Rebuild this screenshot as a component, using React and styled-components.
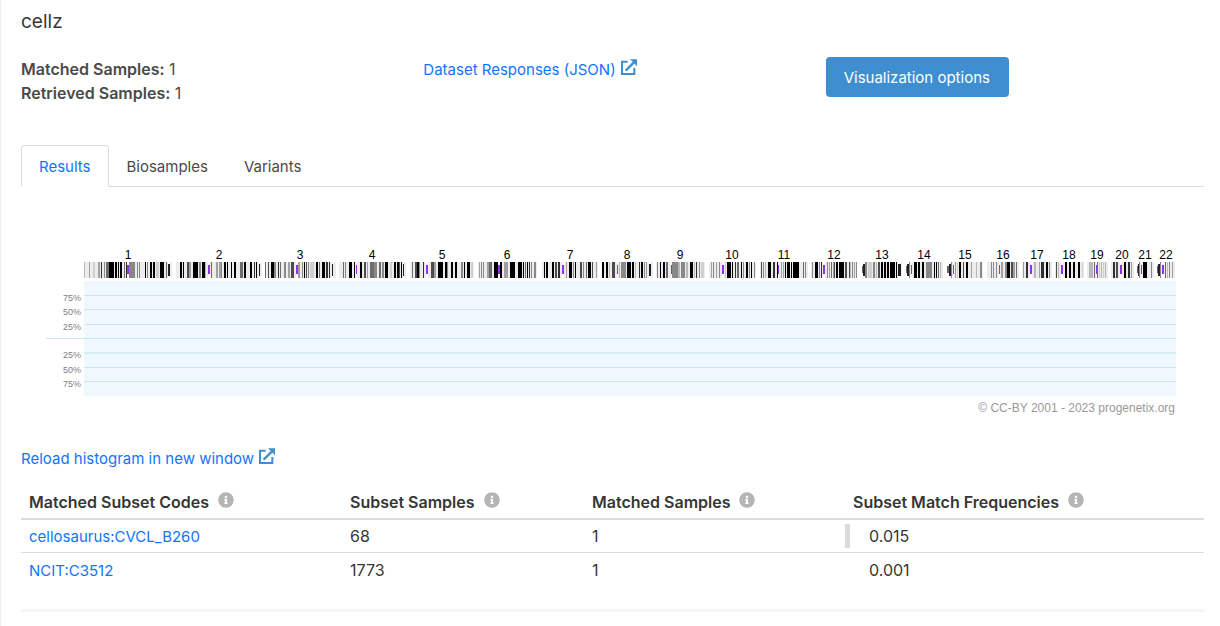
import React from "react";
import styled, { createGlobalStyle, css } from "styled-components";
import { FaInfoCircle } from "react-icons/fa";

const GlobalStyle = createGlobalStyle`
  *, *::before, *::after { box-sizing: border-box; }
  body {
    margin: 0;
    background: #fff;
    color: #4a4a4a;
    font-family: Inter, "Liberation Sans", sans-serif;
    font-size: 15px;
    line-height: 24px;
  }
`;

const Page = styled.main`
  min-height: 100vh;
  padding: 10px 16px 0 20px;
  border-left: 1px solid #ededed;
`;

const Title = styled.h1`
  margin: 0 0 23px;
  font-size: 19px;
  font-weight: 400;
  line-height: 24px;
  color: #363636;
`;

const Summary = styled.section`
  display: grid;
  grid-template-columns: repeat(3, 1fr);
  gap: 24px;
  align-items: start;
`;

const Counts = styled.div`
  font-size: 16px;
  strong { font-weight: 600; }
`;

const LinkLine = styled.div`
  padding-top: 1px;
`;

const Link = styled.a`
  color: #1473ff;
  font-size: 15px;
  line-height: 1;
  text-decoration: none;
`;

const LinkIcon = styled.svg`
  width: 16px;
  height: 16px;
  margin-left: 5px;
  color: #3e8ed0;
`;

const OptionsButton = styled.button`
  height: 40px;
  padding: 2px 19px 0 18px;
  border: 0;
  border-radius: 4px;
  background: #3e8ed0;
  color: #fff;
  font: inherit;
`;

const Tabs = styled.nav`
  display: flex;
  margin-top: 40px;
  border-bottom: 1px solid #dbdbdb;
`;

const Tab = styled.button`
  height: 42px;
  margin-bottom: -1px;
  padding: 2px 17px 0;
  border: 1px solid transparent;
  border-radius: 4px 4px 0 0;
  background: transparent;
  color: #4a4a4a;
  font: inherit;
  ${({ $active }) => $active && css`
    border-color: #dbdbdb;
    border-bottom-color: #fff;
    background: #fff;
    color: #1473ff;
  `}
`;

const Chart = styled.svg`
  display: block;
  width: 100%;
  height: auto;
  margin: 48px 0 26px;
  font-family: "Liberation Sans", Arial, sans-serif;
`;

const ChromosomeLabel = styled.text`
  font-size: 12px;
  text-anchor: middle;
  fill: #000;
`;

const AxisLabel = styled.text`
  font-size: 9px;
  text-anchor: end;
  fill: #808080;
`;

const Credit = styled.text`
  font-size: 12px;
  text-anchor: end;
  fill: #999;
`;

const Table = styled.table`
  width: 100%;
  margin-top: 15px;
  border-collapse: separate;
  border-spacing: 0;
  table-layout: fixed;
  color: #363636;
  font-size: 16px;
`;

const HeadCell = styled.th`
  width: ${({ $width }) => $width || "auto"};
  height: 34px;
  padding: 0 8px;
  border-bottom: 2px solid #dbdbdb;
  text-align: left;
  font-weight: 600;
`;

const InfoIcon = styled(FaInfoCircle)`
  width: 16px;
  height: 16px;
  margin-left: 9px;
  color: #b5b5b5;
`;

const Row = styled.tr`
  &:not(:last-child) td { border-bottom: 1px solid #dbdbdb; }
`;

const Cell = styled.td`
  height: 33px;
  padding: 4px 8px;
`;

const FrequencyCell = styled(Cell)`
  padding: 4px 0;
`;

const Frequency = styled.div`
  position: relative;
  padding-left: 24px;
`;

const FrequencyBar = styled.span`
  position: absolute;
  inset: 0 auto 0 0;
  background: #dbdbdb;
`;

const Divider = styled.hr`
  height: 3px;
  margin: 23px 0;
  border: 0;
  background: #f5f5f5;
`;

/* Each chromosome: name, start, length, bands as "offset.width.stain".
   Stain 1-9 runs light to black, c is the centromere, p a narrow satellite,
   s the shorter stalk beside it. */
const chromosomes = [
  ["1", 0, 88, "0.1.3 5.1.4 9.2.2 14.2.4 17.1.8 20.1.5 22.3.6 25.5.9 31.2.9 34.1.9 36.2.9 40.1.6 42.1.8 43.2.c 45.6.5 53.1.5 55.1.5 61.1.9 63.1.5 66.2.9 69.2.9 72.3.2 76.4.9 82.1.6 84.2.p"],
  ["2", 92, 86, "4.2.9 7.1.9 11.2.7 13.2.4 17.5.9 23.2.5 26.3.9 29.1.3 32.2.c 35.1.6 40.2.4 43.2.4 45.1.5 48.2.9 51.1.9 55.1.9 58.2.9 64.3.6 68.2.9 74.2.9 78.1.8 80.1.9 83.1.p"],
  ["3", 181, 71, "0.1.6 3.1.7 6.3.9 9.2.5 13.1.8 15.1.6 19.2.5 23.2.4 26.3.7 31.2.c 33.2.4 37.1.5 39.1.9 41.1.7 43.1.5 45.4.2 51.2.9 54.1.6 57.3.9 61.2.8 64.1.8 67.1.p"],
  ["4", 255, 67, "4.1.6 6.1.5 10.3.9 15.1.9 17.1.c 21.2.9 25.2.7 28.1.4 31.4.6 35.3.5 40.2.6 43.2.5 46.3.9 51.2.2 55.2.9 58.2.9 60.1.7 62.1.9 64.1.p"],
  ["5", 326, 64, "2.1.6 5.2.7 7.2.9 9.1.5 13.1.8 16.2.c 21.3.7 24.2.4 28.5.9 35.2.9 37.1.5 41.2.9 45.2.9 51.2.5 54.1.9 57.3.9 61.2.2"],
  ["6", 394, 59, "1.1.4 3.1.5 5.1.5 9.2.4 11.3.6 16.4.9 20.2.c 22.2.9 26.4.4 32.5.9 40.4.9 45.1.9 47.1.6 49.1.9 51.1.8 53.1.5 56.2.5"],
  ["7", 458, 56, "2.1.9 4.2.9 10.2.9 13.2.7 16.2.8 20.2.c 24.1.4 27.3.9 31.1.5 33.1.9 38.2.7 41.1.5 44.1.6 46.3.9 50.1.7 54.1.4"],
  ["8", 518, 51, "0.2.9 4.2.9 7.1.3 10.3.7 15.1.c 17.1.3 19.5.5 25.4.9 30.2.9 33.1.3 37.1.8 39.2.9 42.1.5 44.1.4 47.2.p"],
  ["9", 572, 49, "1.1.5 4.1.9 7.2.9 10.2.6 15.1.c 16.6.5 22.2.3 25.4.5 30.2.3 34.3.9 38.1.3 40.1.8 43.1.5 45.3.2"],
  ["10", 625, 47, "2.1.4 4.1.5 7.1.4 10.1.5 13.2.c 16.1.2 18.4.9 23.1.9 26.1.8 28.2.6 32.1.9 34.1.5 37.2.9 40.1.5 42.1.9 45.1.5"],
  ["11", 676, 48, "1.1.7 3.1.5 5.1.3 8.3.9 13.2.8 17.1.9 18.1.c 21.1.4 23.1.4 25.1.9 27.3.9 31.1.9 33.6.9 43.1.6 45.1.5"],
  ["12", 727, 46, "1.1.5 4.3.9 8.1.5 10.1.8 12.2.c 16.1.5 18.1.4 20.1.6 22.1.4 23.1.7 25.2.9 28.5.9 34.2.7 38.1.7 39.1.3 41.1.5 43.1.4 45.1.5"],
  ["13", 778, 40, "0.1.s 1.2.p 3.2.5 6.4.2 11.2.5 14.1.3 16.2.7 19.2.9 22.2.9 25.2.9 28.5.9 34.1.9 36.3.p"],
  ["14", 822, 37, "0.1.s 1.2.p 3.1.5 5.1.c 8.3.9 12.2.9 16.2.9 20.6.5 28.1.9 30.1.9 32.1.6 34.1.3"],
  ["15", 863, 36, "0.1.s 1.1.s 2.2.p 4.1.5 6.1.c 8.1.4 10.1.2 12.2.9 16.1.7 19.2.9 24.1.4 29.1.3 33.2.5"],
  ["16", 903, 32, "4.1.5 6.1.5 9.1.5 12.1.c 14.2.4 18.2.5 20.3.9 24.2.7 26.2.4 29.1.6"],
  ["17", 938, 30, "1.1.4 4.2.8 8.2.c 12.2.3 17.1.4 19.3.8 24.2.9 27.1.5"],
  ["18", 971, 29, "1.1.7 3.1.3 6.2.c 10.2.9 14.2.9 18.2.9 23.2.9 27.1.2"],
  ["19", 1003, 21, "2.4.3 7.1.6 9.1.c 10.1.6 12.1.2 14.1.3 16.1.2 18.1.3"],
  ["20", 1027, 23, "2.2.8 5.2.7 9.2.c 13.2.9 17.2.8 20.1.4"],
  ["21", 1053, 17, "0.1.s 1.1.p 2.1.5 4.1.c 6.4.9 14.1.5"],
  ["22", 1073, 18, "0.1.s 1.2.p 3.1.5 5.2.c 8.1.6 10.1.3 12.1.5 15.1.4"],
];

const stains = {
  1: "#ececec", 2: "#cfcfcf", 3: "#b8b8b8", 4: "#a0a0a0", 5: "#888",
  6: "#6c6c6c", 7: "#4c4c4c", 8: "#303030", 9: "#000",
};

/* Bands drawn lower than the full arm: fill, top and height. */
const insetBands = {
  c: ["#9030f0", 3, 9],
  p: ["#222", 2, 12],
  s: ["#666", 4, 7],
};

const gridLines = [
  [60, 1, "75%"], [74, 1, "50%"], [89, 1, "25%"],
  [117, 2, "25%"], [132, 1, "50%"], [146, 1, "75%"],
];

function Band({ code }) {
  const [offset, width, stain] = code.split(".");
  if (insetBands[stain]) {
    const [fill, top, height] = insetBands[stain];
    return (
      <>
        <rect x={offset} width={width} height="16" fill="#fff" />
        <rect x={offset} y={top} width={width} height={height} fill={fill} />
      </>
    );
  }
  return <rect x={offset} width={width} height="16" fill={stains[stain]} />;
}

function Histogram() {
  return (
    <Chart viewBox="0 0 1183 185" role="img" aria-label="CNV histogram">
      <g transform="translate(63 0)" shapeRendering="crispEdges">
        {chromosomes.map(([name, start, length, bands]) => (
          <g key={name} transform={`translate(${start} 27)`}>
            <rect width={length} height="16" fill="#ececec" />
            {bands.split(" ").map((code) => <Band key={code} code={code} />)}
            <ChromosomeLabel x={Math.floor(length / 2)} y="-3">{name}</ChromosomeLabel>
          </g>
        ))}
      </g>
      <g shapeRendering="crispEdges">
        <rect x="63" y="46" width="1092" height="115" fill="#f0f8ff" />
        <rect x="25" y="103" width="1130" height="1" fill="#cae7f0" />
        {gridLines.map(([y, thickness, label]) => (
          <g key={y}>
            <rect x="63" y={y} width="1092" height={thickness} fill={thickness > 1 ? "#d8eef5" : "#cae7f0"} />
            <AxisLabel x="60" y={y + 6}>{label}</AxisLabel>
          </g>
        ))}
      </g>
      <Credit x="1154" y="177">© CC-BY 2001 - 2023 progenetix.org</Credit>
    </Chart>
  );
}

function ExternalLink({ children }) {
  return (
    <Link href="#">
      {children}
      <LinkIcon viewBox="0 0 48 48" aria-hidden="true">
        <path d="M20 8H3V45H40V27" fill="none" stroke="currentColor" strokeWidth="6" />
        <path d="M14 35L39 10" fill="none" stroke="currentColor" strokeWidth="7" />
        <path d="M27 1H48V22Z" fill="currentColor" />
      </LinkIcon>
    </Link>
  );
}

const columns = [
  ["Matched Subset Codes", "321px"],
  ["Subset Samples", "242px"],
  ["Matched Samples", "261px"],
  ["Subset Match Frequencies"],
];

const subsets = [
  { code: "cellosaurus:CVCL_B260", samples: 68, matched: 1, frequency: 0.015 },
  { code: "NCIT:C3512", samples: 1773, matched: 1, frequency: 0.001 },
];

const SMALLEST_BAR = 0.002;

export default function App() {
  return (
    <>
      <GlobalStyle />
      <Page>
        <Title>cellz</Title>
        <Summary>
          <Counts>
            <div><strong>Matched Samples:</strong> 1</div>
            <div><strong>Retrieved Samples:</strong> 1</div>
          </Counts>
          <LinkLine><ExternalLink>Dataset Responses (JSON)</ExternalLink></LinkLine>
          <div><OptionsButton type="button">Visualization options</OptionsButton></div>
        </Summary>
        <Tabs>
          <Tab type="button" $active>Results</Tab>
          <Tab type="button">Biosamples</Tab>
          <Tab type="button">Variants</Tab>
        </Tabs>
        <Histogram />
        <LinkLine><ExternalLink>Reload histogram in new window</ExternalLink></LinkLine>
        <Table>
          <thead>
            <tr>
              {columns.map(([label, width]) => (
                <HeadCell key={label} $width={width} scope="col">
                  {label}<InfoIcon aria-hidden="true" />
                </HeadCell>
              ))}
            </tr>
          </thead>
          <tbody>
            {subsets.map(({ code, samples, matched, frequency }) => (
              <Row key={code}>
                <Cell><Link href="#">{code}</Link></Cell>
                <Cell>{samples}</Cell>
                <Cell>{matched}</Cell>
                <FrequencyCell>
                  <Frequency>
                    {frequency >= SMALLEST_BAR && (
                      <FrequencyBar style={{ width: `${frequency * 100}%` }} />
                    )}
                    {frequency}
                  </Frequency>
                </FrequencyCell>
              </Row>
            ))}
          </tbody>
        </Table>
        <Divider />
      </Page>
    </>
  );
}
